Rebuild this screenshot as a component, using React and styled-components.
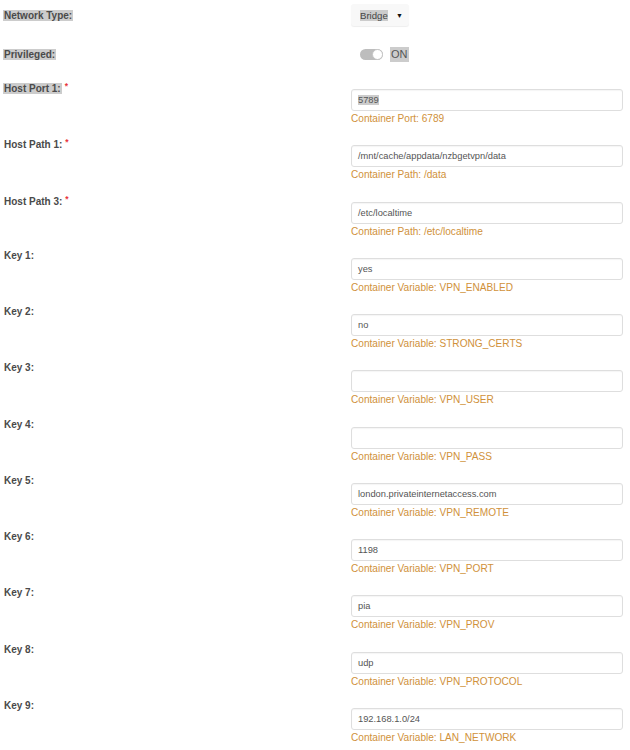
import React from "react";
import styled, { createGlobalStyle } from "styled-components";

const GlobalStyle = createGlobalStyle`
  html, body {
    margin: 0;
    padding: 0;
    background: #ffffff;
  }
  body {
    font-family: "Liberation Sans", Arial, Helvetica, sans-serif;
    color: #4a4a4a;
  }
`;

const Form = styled.div`
  padding: 4px 0 0 4px;
  width: 626px;
`;

const InlineRow = styled.div`
  display: grid;
  grid-template-columns: 347px 272px;
  align-items: center;
  height: 22px;
  margin-bottom: ${(p) => p.$gap}px;
`;

const FieldRow = styled.div`
  display: grid;
  grid-template-columns: 347px 272px;
  align-items: start;
  margin-bottom: 9.25px;
`;

const Label = styled.div`
  font-size: 10px;
  font-weight: bold;
  line-height: 15px;
  color: #4a4a4a;
  white-space: nowrap;
`;

const Selected = styled.span`
  background: #cccccc;
`;

const LabelText = styled.span`
  background: ${(p) => (p.$selected ? "#cccccc" : "transparent")};
  margin-left: ${(p) => (p.$selected ? "-1px" : "0")};
  padding: 0 ${(p) => (p.$selected ? "1px" : "0")};
`;

const Required = styled.span`
  color: #e8353b;
  font-size: 8.5px;
  vertical-align: 3px;
  margin-left: 3px;
`;

const Field = styled.div`
  padding-top: 10px;
  display: flex;
  flex-direction: column;
`;

const Input = styled.div`
  box-sizing: border-box;
  height: 22px;
  width: 272px;
  border: 1px solid #dedede;
  border-radius: 3px;
  box-shadow: inset 0 1px 1px rgba(0, 0, 0, 0.04);
  background: #fff;
  padding: 0 6px;
  display: flex;
  align-items: center;
  font-size: 9.3px;
  color: #555;
  white-space: nowrap;
`;

const Hint = styled.div`
  font-size: 10.1px;
  line-height: 15px;
  color: #d0913a;
`;

const Select = styled.div`
  box-sizing: border-box;
  width: 58px;
  height: 22px;
  border-radius: 3px;
  background: #f8f8f8;
  box-shadow: 0 1px 1px rgba(0, 0, 0, 0.07);
  display: flex;
  align-items: center;
  justify-content: space-between;
  padding: 0 6px 0 9px;
  font-size: 9.6px;
  color: #444;
`;

const Caret = styled.span`
  font-size: 7px;
  color: #111;
`;

const SwitchWrap = styled.div`
  display: flex;
  align-items: center;
  gap: 7px;
  padding-left: 9px;
`;

const Track = styled.div`
  position: relative;
  width: 23px;
  height: 11px;
  border-radius: 6px;
  background: #bdbdbd;
`;

const Knob = styled.div`
  position: absolute;
  right: 0;
  top: 0;
  box-sizing: border-box;
  width: 11px;
  height: 11px;
  border-radius: 50%;
  background: #fff;
  border: 1px solid #c4c4c4;
`;

const OnText = styled.span`
  font-size: 11px;
  line-height: 15px;
  color: #555;
  background: #cccccc;
  padding: 0 1px;
`;

const fields = [
  { label: "Host Port 1:", req: true, value: "5789", hint: "Container Port: 6789", sel: true },
  { label: "Host Path 1:", req: true, value: "/mnt/cache/appdata/nzbgetvpn/data", hint: "Container Path: /data" },
  { label: "Host Path 3:", req: true, value: "/etc/localtime", hint: "Container Path: /etc/localtime" },
  { label: "Key 1:", value: "yes", hint: "Container Variable: VPN_ENABLED" },
  { label: "Key 2:", value: "no", hint: "Container Variable: STRONG_CERTS" },
  { label: "Key 3:", value: "", hint: "Container Variable: VPN_USER" },
  { label: "Key 4:", value: "", hint: "Container Variable: VPN_PASS" },
  { label: "Key 5:", value: "london.privateinternetaccess.com", hint: "Container Variable: VPN_REMOTE" },
  { label: "Key 6:", value: "1198", hint: "Container Variable: VPN_PORT" },
  { label: "Key 7:", value: "pia", hint: "Container Variable: VPN_PROV" },
  { label: "Key 8:", value: "udp", hint: "Container Variable: VPN_PROTOCOL" },
  { label: "Key 9:", value: "192.168.1.0/24", hint: "Container Variable: LAN_NETWORK" },
];

export default function App() {
  return (
    <>
      <GlobalStyle />
      <Form>
        <InlineRow $gap={17}>
          <Label>
            <LabelText $selected>Network Type:</LabelText>
          </Label>
          <div>
            <Select>
              <Selected>Bridge</Selected>
              <Caret>▼</Caret>
            </Select>
          </div>
        </InlineRow>
        <InlineRow $gap={14}>
          <Label>
            <LabelText $selected>Privileged:</LabelText>
          </Label>
          <SwitchWrap>
            <Track>
              <Knob />
            </Track>
            <OnText>ON</OnText>
          </SwitchWrap>
        </InlineRow>
        {fields.map((f) => (
          <FieldRow key={f.label}>
            <Label>
              <LabelText $selected={f.sel}>{f.label}</LabelText>
              {f.req && <Required>*</Required>}
            </Label>
            <Field>
              <Input>{f.sel ? <Selected>{f.value}</Selected> : f.value}</Input>
              <Hint>{f.hint}</Hint>
            </Field>
          </FieldRow>
        ))}
      </Form>
    </>
  );
}
